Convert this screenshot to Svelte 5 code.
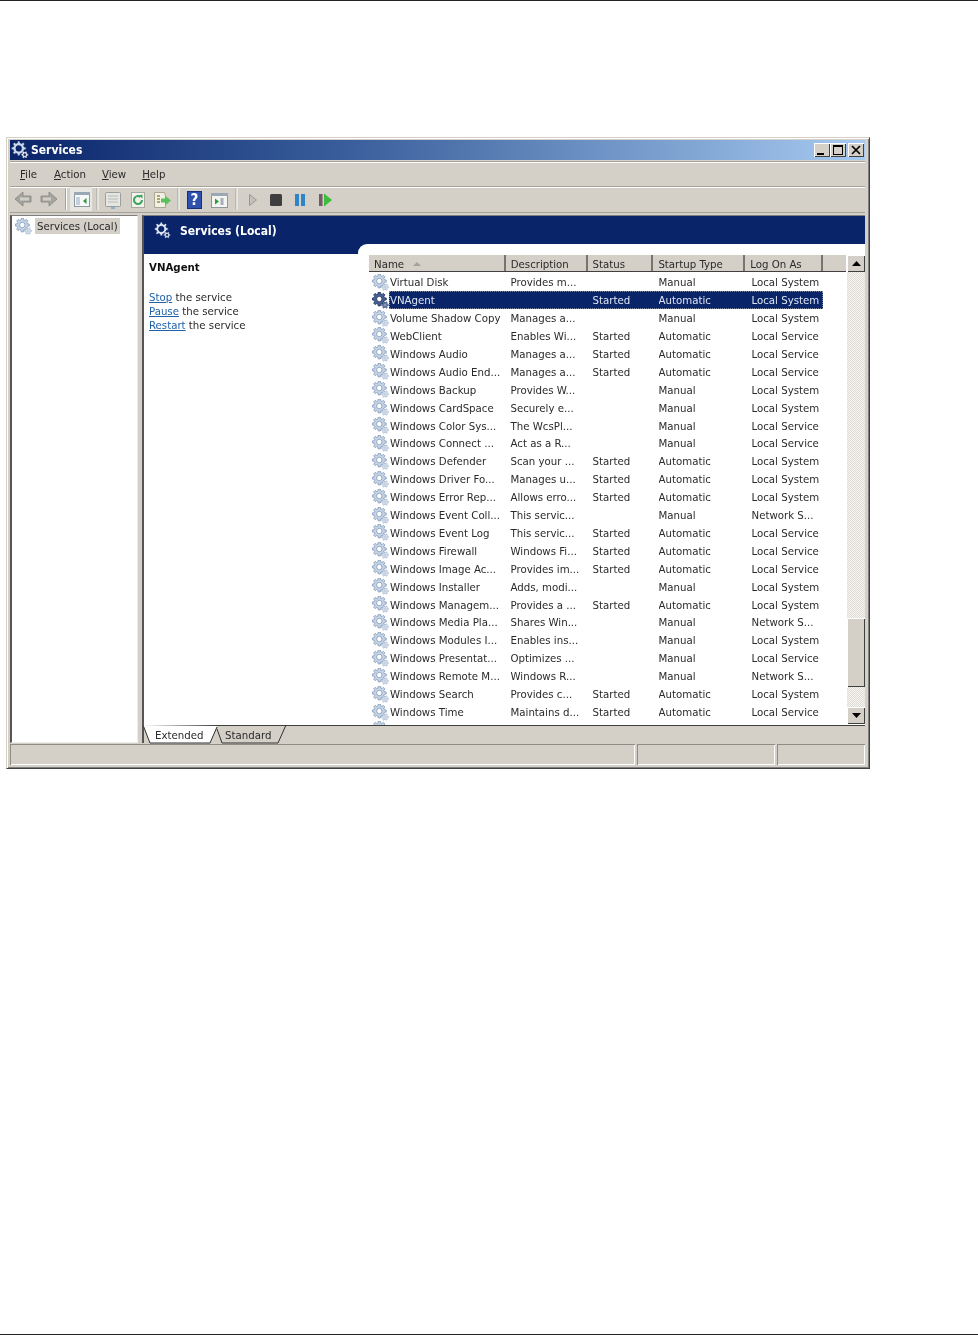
<script>
  const rows = [
    ['Virtual Disk', 'Provides m...', '', 'Manual', 'Local System'],
    ['VNAgent', '', 'Started', 'Automatic', 'Local System'],
    ['Volume Shadow Copy', 'Manages a...', '', 'Manual', 'Local System'],
    ['WebClient', 'Enables Wi...', 'Started', 'Automatic', 'Local Service'],
    ['Windows Audio', 'Manages a...', 'Started', 'Automatic', 'Local Service'],
    ['Windows Audio End...', 'Manages a...', 'Started', 'Automatic', 'Local Service'],
    ['Windows Backup', 'Provides W...', '', 'Manual', 'Local System'],
    ['Windows CardSpace', 'Securely e...', '', 'Manual', 'Local System'],
    ['Windows Color Sys...', 'The WcsPl...', '', 'Manual', 'Local Service'],
    ['Windows Connect ...', 'Act as a R...', '', 'Manual', 'Local Service'],
    ['Windows Defender', 'Scan your ...', 'Started', 'Automatic', 'Local System'],
    ['Windows Driver Fo...', 'Manages u...', 'Started', 'Automatic', 'Local System'],
    ['Windows Error Rep...', 'Allows erro...', 'Started', 'Automatic', 'Local System'],
    ['Windows Event Coll...', 'This servic...', '', 'Manual', 'Network S...'],
    ['Windows Event Log', 'This servic...', 'Started', 'Automatic', 'Local Service'],
    ['Windows Firewall', 'Windows Fi...', 'Started', 'Automatic', 'Local Service'],
    ['Windows Image Ac...', 'Provides im...', 'Started', 'Automatic', 'Local Service'],
    ['Windows Installer', 'Adds, modi...', '', 'Manual', 'Local System'],
    ['Windows Managem...', 'Provides a ...', 'Started', 'Automatic', 'Local System'],
    ['Windows Media Pla...', 'Shares Win...', '', 'Manual', 'Network S...'],
    ['Windows Modules I...', 'Enables ins...', '', 'Manual', 'Local System'],
    ['Windows Presentat...', 'Optimizes ...', '', 'Manual', 'Local Service'],
    ['Windows Remote M...', 'Windows R...', '', 'Manual', 'Network S...'],
    ['Windows Search', 'Provides c...', 'Started', 'Automatic', 'Local System'],
    ['Windows Time', 'Maintains d...', 'Started', 'Automatic', 'Local Service'],
    ['', '', '', '', '']
  ];

  // outline of a toothed wheel, used for the services icon
  function gear(cx, cy, r, hole, teeth) {
    let d = '';
    const step = (Math.PI * 2) / teeth;
    for (let i = 0; i < teeth; i++) {
      const a = i * step;
      const pts = [
        [r * 0.76, a - step * 0.32],
        [r, a - step * 0.18],
        [r, a + step * 0.18],
        [r * 0.76, a + step * 0.32]
      ];
      for (const [m, t] of pts) {
        d += (d ? 'L' : 'M') + (cx + m * Math.cos(t)).toFixed(2) + ' ' + (cy + m * Math.sin(t)).toFixed(2);
      }
    }
    d += 'Z';
    d += `M${cx + hole} ${cy}a${hole} ${hole} 0 1 0 ${-2 * hole} 0a${hole} ${hole} 0 1 0 ${2 * hole} 0Z`;
    return d;
  }
  const bigGear = gear(7.3, 7, 7, 2.7, 8);
  const smallGear = gear(13, 13, 3.4, 1.1, 6);
</script>

{#snippet gearIcon(big, small, edge)}
  <svg class="gear" width="17" height="17" viewBox="0 0 17 17">
    <path d={bigGear} fill={big} fill-rule="evenodd" stroke={edge} stroke-width="0.8" />
    <path d={smallGear} fill={small} fill-rule="evenodd" stroke={edge} stroke-width="0.5" />
  </svg>
{/snippet}

<div class="page">
  <div class="window">
    <div class="titlebar">
      <svg width="18" height="18" viewBox="0 0 17 17">
        <path d={bigGear} fill="#c9d8ec" fill-rule="evenodd" stroke="#0c1e50" stroke-width="0.5" />
        <path d={smallGear} fill="#eef3fa" fill-rule="evenodd" stroke="#0c1e50" stroke-width="0.4" />
      </svg>
      <span class="title">Services</span>
      <div class="caption-btns">
        <span class="cap"><svg width="16" height="14" viewBox="0 0 16 14"><rect x="3" y="10" width="7" height="2" fill="#000" /></svg></span>
        <span class="cap"><svg width="16" height="14" viewBox="0 0 16 14"><path d="M3 2h10v10H3z M4 4v7h8V4z" fill="#000" fill-rule="evenodd" /></svg></span>
        <span class="cap close"><svg width="16" height="14" viewBox="0 0 16 14"><path d="M4 3l8 8M12 3l-8 8" stroke="#000" stroke-width="1.7" /></svg></span>
      </div>
    </div>

    <div class="bar menu">
      <span class="m1"><u>F</u>ile</span>
      <span class="m2"><u>A</u>ction</span>
      <span class="m3"><u>V</u>iew</span>
      <span class="m4"><u>H</u>elp</span>
    </div>

    <div class="bar toolbar">
      <svg width="350" height="24" viewBox="0 0 350 24">
        <!-- back / forward -->
        <path d="M1 12l8-7v4h8v6H9v4z" fill="#a5a5a0" stroke="#85837d" stroke-width="0.8" />
        <path d="M6 10.500h9v3H6z" fill="#d0cec7" />
        <path d="M43 12l-8-7v4h-8v6h8v4z" fill="#a5a5a0" stroke="#85837d" stroke-width="0.8" />
        <path d="M29 10.500h8v3h-8z" fill="#d0cec7" />
        <path d="M51.500 1v22" stroke="#a5a29a" />
        <path d="M52.500 1v22" stroke="#fff" />
        <!-- show/hide tree, pressed -->
        <rect x="56" y="0" width="22" height="24" fill="#e9e7e2" />
        <rect x="60.500" y="5.500" width="15" height="14" fill="#f6f8fa" stroke="#8a98a6" />
        <rect x="60" y="5" width="16" height="3" fill="#9aa7b5" />
        <rect x="62" y="10" width="4" height="8" fill="#c5d0da" />
        <path d="M72.500 11v6l-3.500-3z" fill="#2f9a3c" />
        <path d="M83 1v22" stroke="#a5a29a" />
        <path d="M84 1v22" stroke="#fff" />
        <!-- properties -->
        <rect x="91.500" y="5.500" width="15" height="14" rx="1" fill="#e6e6e0" stroke="#9a9e9e" />
        <path d="M94 9h10M94 12h10M94 15h10" stroke="#b5baba" />
        <path d="M97 20h4v2h-4z" fill="#8fb0c8" />
        <!-- refresh -->
        <rect x="117.500" y="5.500" width="13" height="15" fill="#f2f2ec" stroke="#a8a89e" />
        <path d="M128 13a4 4 0 1 1-1.500-3.100" fill="none" stroke="#3aa35a" stroke-width="2" />
        <path d="M125 8.500l3.500-1v4z" fill="#3aa35a" />
        <!-- export -->
        <path d="M140.500 5.500h10l1 4v11h-11z" fill="#f2f0e2" stroke="#a8a892" />
        <path d="M143 9h3M143 12h3M143 15h3" stroke="#9a8a54" stroke-width="1.400" />
        <path d="M147 11.500h4V8.500l6 5-6 5v-3h-4z" fill="#5cbf5c" />
        <path d="M164 1v22" stroke="#a5a29a" />
        <path d="M165 1v22" stroke="#fff" />
        <!-- help -->
        <rect x="173.500" y="4.500" width="14" height="17" fill="#2f50ad" stroke="#1a2f78" />
        <text x="180.500" y="18" class="qm">?</text>
        <!-- action pane -->
        <rect x="197.500" y="6.500" width="16" height="14" fill="#f4f4f0" stroke="#8a96a0" />
        <rect x="197" y="6" width="17" height="3" fill="#9aa7b5" />
        <path d="M201 11.500v6l4-3z" fill="#2f9a3c" />
        <path d="M208 11v7" stroke="#a5b0ba" stroke-width="3" />
        <path d="M222 1v22" stroke="#a5a29a" />
        <path d="M223 1v22" stroke="#fff" />
        <!-- play stop pause resume -->
        <path d="M235.500 7.500v11l7-5.500z" fill="#c3c1ba" stroke="#9a9892" />
        <rect x="256" y="7" width="12" height="12" rx="1.500" fill="#3e3e3e" />
        <rect x="281" y="7" width="4" height="12" fill="#2d84c8" />
        <rect x="287" y="7" width="4" height="12" fill="#2d84c8" />
        <rect x="305" y="7" width="3.500" height="12" fill="#75586a" />
        <path d="M310 6.500v13l8-6.500z" fill="#3dbb3d" />
      </svg>
    </div>

    <div class="panes">
      <div class="tree">
        <div class="tree-item">
          {@render gearIcon('#c4d3e6', '#e0e9f3', '#8199b8')}
          <span class="tree-label">Services (Local)</span>
        </div>
      </div>

      <div class="main">
        <div class="head">
          {@render gearIcon('#dfe8f5', '#f2f5fa', '#0a246a')}
          <span>Services (Local)</span>
        </div>
        <div class="body">
          <div class="detail">
            <div class="agent">VNAgent</div>
            <div class="action"><a href="#stop">Stop</a> the service</div>
            <div class="action"><a href="#pause">Pause</a> the service</div>
            <div class="action"><a href="#restart">Restart</a> the service</div>
          </div>
          <div class="listwrap">
            <div class="list">
              <div class="columns">
                <div class="th c0">Name <i class="sort"></i></div>
                <div class="th c1">Description</div>
                <div class="th c2">Status</div>
                <div class="th c3">Startup Type</div>
                <div class="th c4">Log On As</div>
                <div class="th c5"></div>
              </div>
              <div class="rows">
                {#each rows as r, i}
                  <div class="row" class:sel={i === 1}>
                    {#if i === 1}
                      {@render gearIcon('#46608f', '#6f86ad', '#1b2f60')}
                    {:else}
                      {@render gearIcon('#c4d3e6', '#e0e9f3', '#8199b8')}
                    {/if}
                    <div class="cell c0">{r[0]}</div>
                    <div class="cell c1">{r[1]}</div>
                    <div class="cell c2">{r[2]}</div>
                    <div class="cell c3">{r[3]}</div>
                    <div class="cell c4">{r[4]}</div>
                  </div>
                {/each}
              </div>
            </div>
            <div class="scroll">
              <div class="sbtn"><svg width="9" height="5" viewBox="0 0 9 5"><path d="M4.500 0L9 5H0z" fill="#000" /></svg></div>
              <div class="track a"></div>
              <div class="thumb"></div>
              <div class="track b"></div>
              <div class="sbtn"><svg width="9" height="5" viewBox="0 0 9 5"><path d="M4.500 5L9 0H0z" fill="#000" /></svg></div>
            </div>
          </div>
        </div>
        <div class="tabs">
          <div class="tab first">
            <svg width="74" height="19" viewBox="0 0 74 19"><path d="M-1 0L6 18H66L73 1z" fill="#fff" /><path d="M-1 0L6 18H66L73 2" fill="none" stroke="#303030" /></svg>
            <span>Extended</span>
          </div>
          <div class="tab second">
            <svg width="74" height="19" viewBox="0 0 74 19"><path d="M-1 4L4 18H60L68 0" fill="none" stroke="#303030" /></svg>
            <span>Standard</span>
          </div>
        </div>
      </div>
    </div>

    <div class="status">
      <div class="sect s1"></div>
      <div class="sect s2"></div>
      <div class="sect s3"></div>
    </div>
  </div>
  <div class="foot"></div>
</div>

<style>
  :global(body) {
    margin: 0;
    background: #fff;
  }

  .page {
    height: 1336px;
    box-sizing: border-box;
    border-top: 1px solid #222;
    padding: 136px 0 0 6px;
    display: flex;
    flex-direction: column;
  }

  .foot {
    margin-top: auto;
    margin-left: -6px;
    margin-bottom: 1px;
    border-top: 1px solid #222;
  }

  .window {
    width: 864px;
    height: 632px;
    box-sizing: border-box;
    background: #d4d0c8;
    border: 1px solid #d4d0c8;
    border-right-color: #404040;
    border-bottom-color: #404040;
    box-shadow: inset 1px 1px 0 #fff, inset -1px -1px 0 #808080;
    padding: 2px 4px 3px 3px;
    font-family: "DejaVu Sans", sans-serif;
    font-stretch: condensed;
    font-size: 11.35px;
    color: #2a2a2a;
    display: flex;
    flex-direction: column;
    filter: blur(0.4px);
  }

  .titlebar {
    height: 20px;
    background: linear-gradient(90deg, #0a246a 0%, #3a5f9c 40%, #a6caf0 100%);
    display: flex;
    align-items: center;
    padding: 0 1px 0 1px;
    flex: none;
  }

  .title {
    color: #fff;
    font-weight: bold;
    font-size: 12px;
    margin-left: 2px;
  }

  .caption-btns {
    margin-left: auto;
    display: flex;
  }

  .cap {
    width: 16px;
    height: 14px;
    background: #d4d0c8;
    box-shadow: inset 1px 1px 0 #fff, inset -1px -1px 0 #404040;
    display: block;
  }

  .cap svg {
    display: block;
  }

  .close {
    margin-left: 2px;
  }

  .bar {
    flex: none;
    box-sizing: border-box;
    border-top: 1px solid #fff;
    border-bottom: 1px solid #a5a29a;
    margin-top: 1px;
  }

  .menu {
    height: 26px;
    display: flex;
    align-items: center;
    border-top-color: #a5a29a;
    box-shadow: inset 0 1px 0 #fff;
  }

  .m1 { margin-left: 10px; }
  .m2 { margin-left: 17px; }
  .m3 { margin-left: 16px; }
  .m4 { margin-left: 16px; }

  .toolbar {
    height: 26px;
    margin-top: 0;
    padding: 0 0 2px 4px;
    display: flex;
    align-items: center;
  }

  .toolbar svg {
    display: block;
  }

  .qm {
    fill: #fff;
    font-size: 15px;
    font-weight: bold;
    text-anchor: middle;
  }

  .panes {
    flex: 1;
    min-height: 0;
    margin-top: 2px;
    display: flex;
    gap: 4px;
  }

  .tree {
    width: 128px;
    box-sizing: border-box;
    background: #fff;
    border: 1px solid #808080;
    border-left-width: 2px;
    border-left-color: #555;
    border-right-color: #eee;
    border-bottom-color: #eee;
    padding: 2px 0 0 3px;
  }

  .tree-item {
    display: flex;
    align-items: center;
    height: 16px;
  }

  .tree-label {
    background: #d4d0c8;
    margin-left: 3px;
    padding: 0 2px;
    line-height: 17px;
    height: 16px;
    white-space: nowrap;
  }

  .gear {
    flex: none;
    display: block;
  }

  .main {
    flex: 1;
    min-width: 0;
    display: flex;
    flex-direction: column;
    border-left: 2px solid #555;
    border-top: 1px solid #808080;
  }

  .head {
    height: 28px;
    flex: none;
    background: #0a246a;
    color: #fff;
    font-size: 12px;
    font-weight: bold;
    display: flex;
    align-items: center;
    gap: 9px;
    padding: 1px 0 0 10px;
    box-sizing: border-box;
  }

  .body {
    flex: 1;
    min-height: 0;
    display: flex;
    background: linear-gradient(#0a246a 10px, #fff 10px);
  }

  .detail {
    width: 214px;
    flex: none;
    margin-top: 10px;
    background: #fff;
    padding: 6px 0 0 5px;
    box-sizing: border-box;
  }

  .agent {
    font-weight: bold;
    color: #111;
    margin-bottom: 16px;
    line-height: 15px;
  }

  .action {
    line-height: 13.8px;
  }

  .action a {
    color: #1f62a8;
  }

  .listwrap {
    flex: 1;
    min-width: 0;
    background: #fff;
    border-top-left-radius: 9px;
    padding: 11px 1px 0 10px;
    display: flex;
  }

  .list {
    width: 478px;
    flex: none;
    min-height: 0;
    display: flex;
    flex-direction: column;
  }

  .columns {
    display: flex;
    height: 17px;
    flex: none;
    background: #d4d0c8;
    border-bottom: 1px solid #404040;
    box-sizing: border-box;
    margin-left: 1px;
  }

  .th {
    box-sizing: border-box;
    line-height: 18px;
    padding-left: 5px;
    border-right: 2px solid #77756f;
    white-space: nowrap;
  }

  .th.c0 { width: 137px; }
  .th.c1 { width: 82px; }
  .th.c2 { width: 66px; }
  .th.c3 { width: 92px; }
  .th.c4 { width: 78px; }
  .th.c5 { width: 23px; border-right: none; }

  .sort {
    display: inline-block;
    margin-left: 6px;
    border: 4px solid transparent;
    border-top: 0;
    border-bottom: 4px solid #a5a29a;
    vertical-align: 2px;
  }

  .rows {
    flex: 1;
    min-height: 0;
    overflow: hidden;
    padding-top: 1.3px;
  }

  .row {
    display: flex;
    align-items: center;
    height: 17.92px;
    position: relative;
    padding-left: 4px;
  }

  .row.sel {
    color: #dfe6f2;
    background: linear-gradient(#0a246a, #0a246a) 21px 0 / 434px 100% no-repeat;
  }

  .row.sel::after {
    content: "";
    position: absolute;
    left: 21px;
    top: 0;
    width: 434px;
    height: 100%;
    box-sizing: border-box;
    border: 1px dotted #7f86a0;
  }

  .cell {
    white-space: nowrap;
    overflow: hidden;
  }

  .row .c0 { width: 120px; margin-left: 1px; }
  .row .c1 { width: 82px; padding-left: 0.5px; }
  .row .c2 { width: 66px; }
  .row .c3 { width: 93px; }
  .row .c4 { width: 78px; }

  .scroll {
    width: 18px;
    flex: none;
    display: flex;
    flex-direction: column;
    margin-left: 1px;
    padding-bottom: 1px;
  }

  .sbtn {
    height: 17px;
    flex: none;
    background: #d4d0c8;
    box-shadow: inset 1px 1px 0 #fff, inset -1px -1px 0 #404040;
    display: flex;
    align-items: center;
    justify-content: center;
  }

  .track {
    background: repeating-conic-gradient(#dedbd4 0 25%, #f6f5f2 0 50%) 0 0 / 2px 2px;
  }

  .track.a { flex: 1; }
  .track.b { height: 20px; flex: none; }

  .thumb {
    height: 69px;
    flex: none;
    background: #d4d0c8;
    box-shadow: inset 1px 1px 0 #fff, inset -1px -1px 0 #404040;
  }

  .tabs {
    height: 18px;
    flex: none;
    background: #d4d0c8;
    border-top: 1px solid #404040;
    box-sizing: border-box;
    display: flex;
  }

  .tab {
    position: relative;
    height: 17px;
    line-height: 19px;
    box-sizing: border-box;
  }

  .first { width: 74px; padding-left: 11px; }
  .second { width: 74px; padding-left: 7px; }

  .tab svg {
    position: absolute;
    left: 0;
    top: -1px;
    overflow: visible;
  }

  .tab span {
    position: relative;
  }

  .status {
    height: 21px;
    flex: none;
    margin-top: 1px;
    display: flex;
    gap: 2px;
  }

  .sect {
    box-shadow: inset 1px 1px 0 #8f8c84, inset -1px -1px 0 #fff;
  }

  .s1 { width: 625px; }
  .s2 { width: 138px; }
  .s3 { flex: 1; }
</style>
